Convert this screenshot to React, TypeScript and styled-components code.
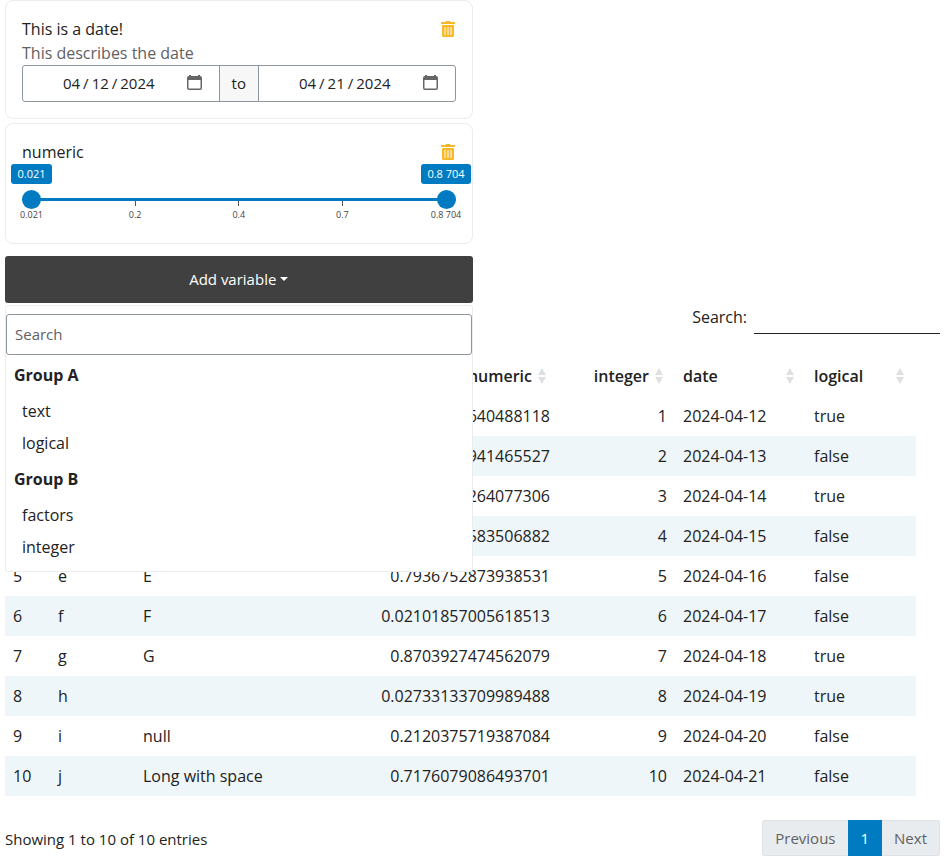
import React, { useRef, useState } from "react";
import styled, { createGlobalStyle } from "styled-components";
import { FaTrashAlt } from "react-icons/fa";

const color = {
  text: "#222222",
  muted: "#616161",
  primary: "#007bc2",
  border: "#8d959e",
  light: "#eaecee",
  stripe: "#eef6f9",
  dark: "#404040",
  warning: "#f9b928",
};

const GlobalStyle = createGlobalStyle`
  *, *::before, *::after { box-sizing: border-box; }
  body {
    margin: 0;
    background: #ffffff;
    color: ${color.text};
    font: 16px/24px "Open Sans", sans-serif;
  }
  button, input { font-family: inherit; color: inherit; }
`;

const Page = styled.main`
  padding: 0 5px 4px;
`;

const FilterPanel = styled.section`
  width: 50%;
  display: flex;
  flex-direction: column;
`;

const Card = styled.div`
  margin-bottom: 4px;
  padding: 16px;
  border: 1px solid ${color.light};
  border-radius: 8px;
`;

const CardHeader = styled.div`
  display: flex;
  justify-content: space-between;
  align-items: center;
  height: 24px;
`;

const RemoveButton = styled.button`
  display: flex;
  padding: 0;
  border: 0;
  background: none;
  color: ${color.warning};
  cursor: pointer;
`;

const Description = styled.div`
  color: ${color.muted};
`;

const DateRange = styled.div`
  display: flex;
  height: 37px;
  border: 1px solid ${color.border};
  border-radius: 3px;
  font-size: 15px;
`;

const DateBox = styled.div`
  flex: 1;
  min-width: 0;
  display: flex;
  align-items: center;
  padding: 0 16px 2px 8px;
`;

const DateInput = styled.input`
  flex: 1;
  min-width: 0;
  padding: 0;
  border: 0;
  outline: 0;
  background: transparent;
  font-size: 15px;
  text-align: center;
  &::-webkit-calendar-picker-indicator { display: none; }
  &::-webkit-datetime-edit-text { padding: 0 2px; }
`;

const CalendarButton = styled.button`
  display: flex;
  padding: 0;
  border: 0;
  background: none;
  cursor: pointer;
`;

const RangeSeparator = styled.span`
  display: flex;
  align-items: center;
  padding: 0 12px 2px;
  border: solid ${color.border};
  border-width: 0 1px;
  background: #f7f7f7;
`;

const Slider = styled.div`
  display: flex;
  flex-direction: column;
  height: 63px;
`;

const Stops = styled.div`
  display: flex;
  justify-content: space-between;
  padding: 0 9px;
`;

const Stop = styled.div`
  width: 1px;
  display: flex;
  flex-direction: column;
  align-items: center;
  white-space: nowrap;
`;

const ValueBadge = styled.output`
  padding: 0 6px;
  border-radius: 3px;
  background: ${color.primary};
  color: #ffffff;
  font-size: 11px;
  line-height: 20px;
`;

const Track = styled.div`
  position: relative;
  margin: 14px 0 0;
  height: 3px;
  border-radius: 2px;
  background: ${color.primary};
`;

const RangeInput = styled.input`
  position: absolute;
  inset: -8px 0;
  width: 100%;
  height: 19px;
  margin: 0;
  appearance: none;
  background: transparent;
  pointer-events: none;
  &::-webkit-slider-thumb {
    appearance: none;
    width: 19px;
    height: 19px;
    border: 0;
    border-radius: 50%;
    background: ${color.primary};
    pointer-events: auto;
    cursor: pointer;
  }
`;

const TickLine = styled.i`
  width: 1px;
  height: 5px;
  background: #555555;
`;

const TickLabel = styled.span`
  font-size: 9px;
  line-height: 18px;
  color: #444444;
`;

const Dropdown = styled.div`
  position: relative;
  margin-top: 8px;
`;

const DropdownToggle = styled.button`
  display: flex;
  align-items: center;
  justify-content: center;
  gap: 4px;
  width: 100%;
  height: 47px;
  padding: 0 0 2px;
  border: 0;
  border-radius: 3px;
  background: ${color.dark};
  color: #ffffff;
  font-size: 15px;
  cursor: pointer;
`;

const Caret = styled.i`
  border: 4px solid transparent;
  border-top-color: currentColor;
  border-bottom: 0;
`;

const Menu = styled.div`
  position: absolute;
  z-index: 1;
  top: 100%;
  left: 0;
  right: 0;
  margin-top: 2px;
  padding: 8px 0;
  border: 1px solid ${color.light};
  border-radius: 3px;
  background: #ffffff;
`;

const MenuSearch = styled.input`
  display: block;
  width: 100%;
  height: 41px;
  padding: 0 8px 2px;
  border: 1px solid ${color.border};
  border-radius: 3px;
  outline: 0;
  font-size: 15px;
  &::placeholder { color: ${color.muted}; opacity: 1; }
`;

const GroupTitle = styled.div`
  padding: 8px;
  font-weight: 700;
`;

const MenuItem = styled.button`
  display: block;
  width: 100%;
  padding: 4px 16px;
  border: 0;
  background: none;
  font-size: 16px;
  line-height: 24px;
  text-align: left;
  cursor: pointer;
`;

const TableSearch = styled.label`
  display: flex;
  justify-content: flex-end;
  align-items: flex-start;
  gap: 7px;
  height: 31px;
  line-height: 28px;
`;

const TableSearchInput = styled.input`
  width: 186px;
  height: 31px;
  padding: 0 8px;
  border: 0;
  border-bottom: 1px solid ${color.text};
  outline: 0;
  background: transparent;
  font-size: 15px;
`;

const DataTable = styled.table`
  width: calc(100% - 24px);
  margin-top: 22px;
  table-layout: fixed;
  border-collapse: collapse;
`;

const Column = styled.col<{ $width?: number }>`
  width: ${({ $width }) => ($width ? `${$width}px` : "auto")};
`;

const HeaderCell = styled.th`
  padding: 8px 12px 8px 8px;
  font-weight: 600;
`;

const HeaderContent = styled.div<{ $numeric?: boolean }>`
  display: flex;
  align-items: center;
  justify-content: ${({ $numeric }) => ($numeric ? "flex-end" : "space-between")};
  gap: 6px;
`;

const Row = styled.tr`
  &:nth-child(even) { background: ${color.stripe}; }
`;

const Cell = styled.td<{ $numeric?: boolean }>`
  padding: 8px;
  text-align: ${({ $numeric }) => ($numeric ? "right" : "left")};
  white-space: nowrap;
`;

const TableFooter = styled.footer`
  display: flex;
  justify-content: space-between;
  align-items: center;
  margin-top: 24px;
  font-size: 15px;
`;

const TableInfo = styled.span`
  padding-top: 2px;
`;

const Pagination = styled.nav`
  display: flex;
`;

const PageButton = styled.button<{ $active?: boolean }>`
  height: 36px;
  padding: 0 12px;
  border: 1px solid ${({ $active }) => ($active ? color.primary : "#dee2e6")};
  background: ${({ $active }) => ($active ? color.primary : "#e9ecef")};
  color: ${({ $active }) => ($active ? "#ffffff" : color.muted)};
  font-size: 15px;
  &:first-child { border-radius: 3px 0 0 3px; border-right: 0; }
  &:last-child { border-radius: 0 3px 3px 0; border-left: 0; }
`;

const CalendarIcon = () => (
  <svg width="16" height="16" viewBox="0 0 16 16" aria-hidden="true">
    <path
      fill="#666666"
      fillRule="evenodd"
      d="M2 0h2v1h7V0h2v1a2 2 0 0 1 2 2v10a2 2 0 0 1-2 2H2a2 2 0 0 1-2-2V3a2 2 0 0 1 2-2zM1.500 5V13q0 .5.5.5h11q.5 0 .5-.5V5z"
    />
  </svg>
);

const SortIcon = () => (
  <svg width="8" height="16" viewBox="0 0 8 16" aria-hidden="true">
    <path fill="#dfe0e2" d="M4 0l4 7H0zM4 16l4-7H0z" />
  </svg>
);

function DateField({ label, initial }: { label: string; initial: string }) {
  const ref = useRef<HTMLInputElement>(null);
  return (
    <DateBox>
      <DateInput ref={ref} type="date" aria-label={label} defaultValue={initial} />
      <CalendarButton
        type="button"
        aria-label={`Choose ${label.toLowerCase()}`}
        onClick={() => ref.current?.showPicker()}
      >
        <CalendarIcon />
      </CalendarButton>
    </DateBox>
  );
}

const ticks = ["0.021", "0.2", "0.4", "0.7", "0.8 704"];

const menuGroups = [
  { title: "Group A", items: ["text", "logical"] },
  { title: "Group B", items: ["factors", "integer"] },
];

const columns = [
  { name: "", width: 45 },
  { name: "text", width: 85 },
  { name: "factors" },
  { name: "numeric", width: 186, numeric: true },
  { name: "integer", width: 117, numeric: true },
  { name: "date", width: 131 },
  { name: "logical", width: 110 },
];

const rows = [
  ["a", "A", "0.3078661640488118", "true"],
  ["b", "B", "0.2576725941465527", "false"],
  ["c", "C", "0.5523224264077306", "true"],
  ["d", "D", "0.0563831583506882", "false"],
  ["e", "E", "0.7936752873938531", "false"],
  ["f", "F", "0.02101857005618513", "false"],
  ["g", "G", "0.8703927474562079", "true"],
  ["h", "", "0.02733133709989488", "true"],
  ["i", "null", "0.2120375719387084", "false"],
  ["j", "Long with space", "0.7176079086493701", "false"],
];

export default function App() {
  const [open, setOpen] = useState(true);
  return (
    <>
      <GlobalStyle />
      <Page>
        <FilterPanel>
          <Card>
            <CardHeader>
              <span>This is a date!</span>
              <RemoveButton type="button" aria-label="Remove date filter">
                <FaTrashAlt size={16} />
              </RemoveButton>
            </CardHeader>
            <Description>This describes the date</Description>
            <DateRange>
              <DateField label="Start date" initial="2024-04-12" />
              <RangeSeparator>to</RangeSeparator>
              <DateField label="End date" initial="2024-04-21" />
            </DateRange>
          </Card>
          <Card>
            <CardHeader>
              <span>numeric</span>
              <RemoveButton type="button" aria-label="Remove numeric filter">
                <FaTrashAlt size={16} />
              </RemoveButton>
            </CardHeader>
            <Slider>
              <Stops>
                <Stop><ValueBadge>0.021</ValueBadge></Stop>
                <Stop><ValueBadge>0.8 704</ValueBadge></Stop>
              </Stops>
              <Track>
                <RangeInput type="range" aria-label="Minimum numeric" min={0.021} max={0.8704} step="any" defaultValue={0.021} />
                <RangeInput type="range" aria-label="Maximum numeric" min={0.021} max={0.8704} step="any" defaultValue={0.8704} />
              </Track>
              <Stops>
                {ticks.map((tick) => (
                  <Stop key={tick}>
                    <TickLine />
                    <TickLabel>{tick}</TickLabel>
                  </Stop>
                ))}
              </Stops>
            </Slider>
          </Card>
          <Dropdown>
            <DropdownToggle type="button" aria-expanded={open} onClick={() => setOpen(!open)}>
              Add variable
              <Caret />
            </DropdownToggle>
            {open && (
              <Menu>
                <MenuSearch type="text" placeholder="Search" aria-label="Search variables" />
                {menuGroups.map((group) => (
                  <div key={group.title} role="group" aria-label={group.title}>
                    <GroupTitle>{group.title}</GroupTitle>
                    {group.items.map((item) => (
                      <MenuItem key={item} type="button">{item}</MenuItem>
                    ))}
                  </div>
                ))}
              </Menu>
            )}
          </Dropdown>
        </FilterPanel>

        <TableSearch>
          Search:
          <TableSearchInput type="search" />
        </TableSearch>
        <DataTable>
          <colgroup>
            {columns.map((column) => (
              <Column key={column.name} $width={column.width} />
            ))}
          </colgroup>
          <thead>
            <tr>
              {columns.map((column) => (
                <HeaderCell key={column.name} scope="col">
                  <HeaderContent $numeric={column.numeric}>
                    {column.name}
                    {column.name && <SortIcon />}
                  </HeaderContent>
                </HeaderCell>
              ))}
            </tr>
          </thead>
          <tbody>
            {rows.map(([text, factor, numeric, logical], index) => (
              <Row key={text}>
                <Cell>{index + 1}</Cell>
                <Cell>{text}</Cell>
                <Cell>{factor}</Cell>
                <Cell $numeric>{numeric}</Cell>
                <Cell $numeric>{index + 1}</Cell>
                <Cell>{`2024-04-${index + 12}`}</Cell>
                <Cell>{logical}</Cell>
              </Row>
            ))}
          </tbody>
        </DataTable>
        <TableFooter>
          <TableInfo>Showing 1 to 10 of 10 entries</TableInfo>
          <Pagination aria-label="Table pages">
            <PageButton type="button" disabled>Previous</PageButton>
            <PageButton type="button" $active aria-current="page">1</PageButton>
            <PageButton type="button" disabled>Next</PageButton>
          </Pagination>
        </TableFooter>
      </Page>
    </>
  );
}
